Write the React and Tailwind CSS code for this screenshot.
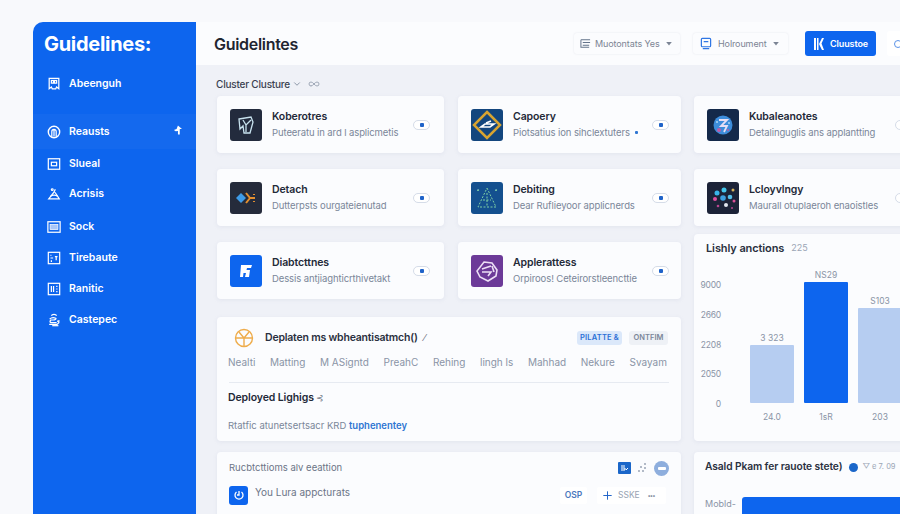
import { ChevronDown, Infinity as InfinityIcon, Plus } from "lucide-react";

const navItems = [
  { label: "Abeenguh", icon: "book", row: "h-[22px] mb-[19px]" },
  { label: "Reausts", icon: "arch", row: "h-[35px] bg-white/[0.03]", arrow: true },
  { label: "Slueal", icon: "box", row: "h-[29px]" },
  { label: "Acrisis", icon: "flask", row: "h-[32px]" },
  { label: "Sock", icon: "panel", row: "h-[33px]" },
  { label: "Tirebaute", icon: "chart", row: "h-[30px]" },
  { label: "Ranitic", icon: "grid", row: "h-[32px]" },
  { label: "Castepec", icon: "stack", row: "h-[30px]" },
];

function NavIcon({ name }) {
  const shared = { width: 14, height: 14, viewBox: "0 0 16 16", fill: "none", stroke: "white", strokeWidth: 1.4 };
  if (name === "book") return (
    <svg {...shared}><path d="M2.500 1.500h11v12l-2.500-2-1 2H6l-1-2-2.500 2z" /><rect x="5" y="4" width="2.500" height="3" /><rect x="8.500" y="4" width="2.500" height="3" /></svg>
  );
  if (name === "arch") return (
    <svg {...shared}><circle cx="8" cy="8" r="6.500" strokeWidth="1.600" /><path d="M5.500 13V7.500a2.500 2.500 0 0 1 5 0V13M8 5v8" /></svg>
  );
  if (name === "box") return (
    <svg {...shared}><rect x="1.500" y="2" width="13" height="12" /><rect x="5" y="6" width="6" height="4" /></svg>
  );
  if (name === "flask") return (
    <svg {...shared}><circle cx="6" cy="3" r="1" /><path d="M9.500 2.500 8 6 2 13.500h12L10.500 8 9 6" /><path d="M4 10.500c2-1.500 6-1.500 8 0" /></svg>
  );
  if (name === "panel") return (
    <svg {...shared}><rect x="1" y="2" width="14" height="12" /><rect x="3.500" y="5" width="9" height="6" fill="#a9c6f7" strokeWidth="0.800" /></svg>
  );
  if (name === "chart") return (
    <svg {...shared}><rect x="1.500" y="1.500" width="13" height="13" /><path d="M4 5h1M4 8h3M9 6.500h3M10.500 6.500v4M5 10.500v2" /></svg>
  );
  if (name === "grid") return (
    <svg {...shared}><rect x="1.500" y="1.500" width="13" height="13" /><path d="M5 4.500v7M7.500 4.500v7M10.500 5h1.500M10.500 8h1.500M10.500 11h1.500" /></svg>
  );
  return (
    <svg {...shared}><path d="M5 3c1-2 5-2 6 0M3 7c2-2 5-2 7-1 1 1-1 2-3 2H4.500C3 9 3 11 5 11h6" /><path d="M2.500 13h9l2-2v-2l-2 .5" /><path d="M6 14.500h7" /></svg>
  );
}

function Sidebar() {
  return (
    <aside className="w-[163px] shrink-0 bg-[#0d65ee] rounded-tl-[10px] text-white">
      <h1 className="pl-[11px] pt-[9px] h-[51px] text-[20px] leading-[26px] font-bold tracking-[-0.3px]">Guidelines:</h1>
      {navItems.map((item) => (
        <div key={item.label} className={`flex items-center pl-[14px] pr-[14px] ${item.row}`}>
          <NavIcon name={item.icon} />
          <span className="ml-[8px] font-semibold text-[10.5px]">{item.label}</span>
          {item.arrow && (
            <svg className="ml-auto mb-[4px]" width="9" height="10" viewBox="0 0 10 10" fill="white">
              <path d="M5.500 0 10 4H7.500v6H5.500V6L3 6.500 1 5l3-1z" />
            </svg>
          )}
        </div>
      ))}
    </aside>
  );
}

function TopButton({ icon, label, width, iconGap }) {
  return (
    <div className={`h-[21px] shrink-0 flex items-center bg-[#fbfcfe] rounded-[3px] shadow-[0_0_2px_rgba(120,130,160,0.18)] pl-[6px] ${width}`}>
      {icon}
      <span className={`text-[9px] text-[#7b8494] tracking-[-0.1px] whitespace-nowrap ${iconGap}`}>{label}</span>
      <svg className="ml-[6px]" width="6" height="4" viewBox="0 0 7 5" fill="#7b8494"><path d="M0 0h7L3.500 4.500z" /></svg>
    </div>
  );
}

function Header() {
  return (
    <header className="h-[43px] shrink-0 bg-[#fbfcfe] flex items-center pl-[18px] overflow-hidden">
      <h2 className="text-[16px] font-semibold text-[#1f2531] tracking-[-0.3px] w-[360px] shrink-0">Guidelintes</h2>
      <TopButton
        label="Muotontats Yes"
        width="w-[106px]"
        iconGap="ml-[4px]"
        icon={
          <svg width="11" height="11" viewBox="0 0 12 12" fill="none" stroke="#64748b" strokeWidth="1.100">
            <path d="M1 2h10M1 2v8h9M3 5h8M3 8h7" />
          </svg>
        }
      />
      <div className="ml-[13px]">
        <TopButton
          label="Holroument"
          width="w-[95px] pl-[7px]"
          iconGap="ml-[6px]"
          icon={
            <svg width="12" height="13" viewBox="0 0 13 13" fill="none" stroke="#2f76e4" strokeWidth="1.300">
              <rect x="1.500" y="1" width="10" height="9" rx="1" />
              <path d="M4 4.500h5M3 12h7" />
            </svg>
          }
        />
      </div>
      <button className="ml-[17px] w-[71px] h-[25px] shrink-0 bg-[#0d65ee] rounded-[3px] flex items-center pl-[9px] text-white">
        <svg width="10" height="12" viewBox="0 0 10 12" fill="white"><path d="M0 0h2v12H0zM3 0h1.500v12H3zM5 6l3-6h2L7.500 5.500 10 12H8z" /></svg>
        <span className="ml-[6px] text-[9px] font-semibold whitespace-nowrap tracking-[-0.1px]">Cluustoe</span>
      </button>
      <div className="ml-[11px] w-[30px] h-[25px] bg-white rounded-[3px] shrink-0 pl-[7px] flex items-center">
        <span className="w-[8px] h-[8px] rounded-full border border-[#5c93e8]" />
      </div>
    </header>
  );
}

function Toggle() {
  return (
    <span className="w-[17px] h-[10px] rounded-full border border-[#d5dce8] bg-white flex items-center justify-center shrink-0">
      <span className="w-[4px] h-[4px] rounded-[1px] bg-[#1f63c9]" />
    </span>
  );
}

function Logo({ kind }) {
  const box = "w-[32px] h-[32px] rounded-[3px] shrink-0 flex items-center justify-center";
  if (kind === "kube") return (
    <div className={`${box} bg-[#232b3d]`}>
      <svg width="20" height="20" viewBox="0 0 20 20" fill="none" stroke="#c8e2ee" strokeWidth="1.300"><path d="M3 4l12-2 2 5-3 11H8l-1-7-3 3zM7 5l3 5 5-5M10 10v7" /></svg>
    </div>
  );
  if (kind === "diamond") return (
    <div className={`${box} bg-[#13467e]`}>
      <svg width="30" height="30" viewBox="0 0 30 30" fill="none"><path d="M15 2 28 15 15 28 2 15z" stroke="#d8a431" strokeWidth="2.500" /><path d="M9 17l4-3h9l-4 3zM14 13l5-2" stroke="white" strokeWidth="1.600" /></svg>
    </div>
  );
  if (kind === "globe") return (
    <div className={`${box} bg-[#14294a]`}>
      <svg width="24" height="24" viewBox="0 0 24 24">
        <circle cx="12" cy="12" r="9.500" fill="#3d8ddb" />
        <path d="M8 7h8l-6 6h6l-3 6" fill="none" stroke="#e6dff5" strokeWidth="1.800" />
        <circle cx="8" cy="17" r="2" fill="#c05ca8" />
        <circle cx="6" cy="9" r="1" fill="#a8d6f5" /><circle cx="18" cy="10" r="1" fill="#a8d6f5" /><circle cx="17" cy="17" r="1" fill="#c05ca8" />
      </svg>
    </div>
  );
  if (kind === "dock") return (
    <div className={`${box} bg-[#252b3b]`}>
      <svg width="22" height="18" viewBox="0 0 22 18" fill="none"><path d="M6 4l5 5-5 5-5-5z" fill="#3e9be8" /><path d="M11 4l4 5-4 5M15 9h5M19 5v1M19 12v1" stroke="#e38f2f" strokeWidth="2" /></svg>
    </div>
  );
  if (kind === "triangle") return (
    <div className={`${box} bg-[#14508f]`}>
      <svg width="26" height="26" viewBox="0 0 26 26" fill="none" stroke="#7fd0a5" strokeWidth="1" strokeDasharray="2 1.500"><path d="M13 3 22 22H4zM9 15h8M13 8v14" /><circle cx="4" cy="5" r="0.700" fill="#9ed4e8" /><circle cx="22" cy="5" r="0.700" fill="#9ed4e8" /></svg>
    </div>
  );
  if (kind === "dots") return (
    <div className={`${box} bg-[#1c2338]`}>
      <svg width="28" height="28" viewBox="0 0 28 28">
        <circle cx="15" cy="6" r="2.500" fill="#44c6ec" /><circle cx="8" cy="9" r="2.500" fill="#39b4e8" /><circle cx="21" cy="13" r="2.300" fill="#57bfe9" />
        <circle cx="14" cy="14" r="2.800" fill="#3c9fe0" /><circle cx="6" cy="15" r="2" fill="#e14fa0" /><circle cx="24" cy="6" r="1.500" fill="#d8b25a" />
        <circle cx="17" cy="21" r="2" fill="#e2e7f0" /><circle cx="25" cy="17" r="1.500" fill="#d94f97" /><circle cx="9" cy="22" r="1.300" fill="#b6468e" /><circle cx="23" cy="24" r="1" fill="#b6468e" />
      </svg>
    </div>
  );
  if (kind === "blue") return (
    <div className={`${box} bg-[#0d65ee]`}>
      <svg width="14" height="14" viewBox="0 0 14 14" fill="white"><path d="M2 1h11l-1 3H8L7.500 6H11l-1 7H6l1-4H4.500L4 13H1z" /></svg>
    </div>
  );
  return (
    <div className={`${box} bg-[#6c3a98]`}>
      <svg width="24" height="24" viewBox="0 0 24 24" fill="none" stroke="#ecdff5" strokeWidth="1.600"><path d="M9 3l8 1 5 7-1 6-8 5-8-4-3-6zM7 10l9-3M7 13h9l-3 4M17 7l2 6" /></svg>
    </div>
  );
}

function AppCard({ logo, title, desc, dot, padRight }) {
  return (
    <div className={`h-[57px] bg-[#fbfcfe] rounded-[4px] shadow-[0_1px_4px_rgba(130,140,170,0.12)] flex items-center pl-[13px] ${padRight}`}>
      <Logo kind={logo} />
      <div className="ml-[10px] whitespace-nowrap">
        <div className="text-[10.5px] leading-[16px] font-semibold text-[#232938] tracking-[-0.1px]">{title}</div>
        <div className="text-[9.5px] leading-[16px] text-[#7a8699] tracking-[-0.1px]">
          {desc}
          {dot && <span className="inline-block ml-[5px] w-[3px] h-[3px] bg-[#2f76d2] rounded-[1px] align-middle" />}
        </div>
      </div>
      <div className="ml-auto"><Toggle /></div>
    </div>
  );
}

const cards = [
  { logo: "kube", title: "Koberotres", desc: "Puteeratu in ard l asplicmetis" },
  { logo: "diamond", title: "Capoery", desc: "Piotsatius ion sihclextuters", dot: true },
  { logo: "dock", title: "Detach", desc: "Dutterpsts ourgateienutad" },
  { logo: "triangle", title: "Debiting", desc: "Dear Ruflieyoor applicnerds" },
  { logo: "blue", title: "Diabtcttnes", desc: "Dessis antjiaghticrthivetakt" },
  { logo: "purple", title: "Applerattess", desc: "Orpiroos! Ceteirorstleencttie" },
];

const tabs = ["Nealti", "Matting", "M ASigntd", "PreahC", "Rehing", "lingh ls", "Mahhad", "Nekure", "Svayam"];

function DeployPanel() {
  return (
    <section className="mt-[18px] h-[124px] bg-[#fbfcfe] rounded-[4px] shadow-[0_1px_4px_rgba(130,140,170,0.12)] px-[11px] pt-[10px]">
      <div className="flex items-center h-[22px]">
        <svg className="ml-[6px]" width="20" height="20" viewBox="0 0 20 20" fill="none" stroke="#eeac4b" strokeWidth="1.400">
          <circle cx="10" cy="10" r="8.500" /><path d="M10 10 5 4M10 10l5-6M10 10v8M10 10H2M10 10h8" />
        </svg>
        <span className="ml-[11px] text-[10.5px] font-semibold text-[#2a3040] tracking-[-0.2px]">Deplaten ms wbheantisatmch()</span>
        <span className="ml-[6px] text-[9px] text-[#6b7280]">⁄</span>
        <span className="ml-auto h-[14px] w-[45px] rounded-[3px] bg-[#dbe8fa] flex items-center justify-center text-[7.5px] font-semibold text-[#2a6fd6] tracking-[0.2px]">PILATTE &amp;</span>
        <span className="ml-[7px] mr-[2px] h-[14px] w-[39px] rounded-[3px] bg-[#eef1f6] flex items-center justify-center text-[7.5px] font-semibold text-[#7a8699]">ONTFIM</span>
      </div>
      <div className="flex justify-between mt-[5px] text-[10px] leading-[16px] text-[#8a94a6] pr-[3px]">
        {tabs.map((tab) => <span key={tab}>{tab}</span>)}
      </div>
      <div className="mt-[12px] h-[1px] bg-[#e6eaf1] mx-[1px]" />
      <div className="mt-[7px] text-[10.5px] leading-[16px] font-semibold text-[#232938] tracking-[-0.1px]">
        Deployed Lighigs <span className="text-[#6b7280] font-normal text-[9px]">⊰</span>
      </div>
      <div className="mt-[13px] text-[9.5px] leading-[14px] text-[#7a8699]">
        Rtatfic atunetsertsacr KRD <span className="text-[#2f76d2] font-semibold">tuphenentey</span>
      </div>
    </section>
  );
}

function RecoPanel() {
  return (
    <section className="mt-[11px] h-[70px] bg-[#fbfcfe] rounded-t-[4px] shadow-[0_1px_4px_rgba(130,140,170,0.12)] pl-[12px] pr-[12px] pt-[8px]">
      <div className="flex items-center h-[16px]">
        <span className="text-[9.5px] text-[#6b7587]">Rucbtcttioms alv eeattion</span>
        <svg className="ml-auto" width="13" height="12" viewBox="0 0 13 12"><rect width="13" height="12" rx="1" fill="#1a66c9" /><path d="M3 4h4M3 6h4v2H3M8 8l2-2" stroke="white" fill="none" /></svg>
        <svg className="ml-[6px]" width="12" height="12" viewBox="0 0 12 12" fill="#9aa5b5"><circle cx="8" cy="2" r="1" /><circle cx="4" cy="5" r="1" /><circle cx="8" cy="6" r="1" /><circle cx="2" cy="9" r="1" /><circle cx="6" cy="9" r="1" /></svg>
        <span className="ml-[5px] w-[15px] h-[15px] rounded-full bg-[#8eaedd] flex items-center justify-center">
          <span className="w-[8px] h-[3px] rounded-[1px] bg-white" />
        </span>
      </div>
      <div className="flex items-center mt-[9px]">
        <span className="w-[19px] h-[19px] rounded-[3px] bg-[#0d65ee] flex items-center justify-center">
          <svg width="12" height="12" viewBox="0 0 12 12" fill="none" stroke="white" strokeWidth="1.300"><path d="M3.500 3a4 4 0 1 0 5 0M6 2v4l-2 0" /></svg>
        </span>
        <span className="ml-[7px] mb-[5px] text-[10px] text-[#6b7587]">You Lura appcturats</span>
        <span className="ml-auto h-[17px] w-[27px] bg-white rounded-[2px] flex items-center justify-center text-[8.5px] text-[#4a78bd] font-semibold">OSP</span>
        <span className="ml-[10px] mr-[3px] h-[17px] w-[69px] bg-white rounded-[2px] flex items-center pl-[4px] text-[8.5px] text-[#98a3b3]">
          <Plus size={13} strokeWidth={1.800} className="text-[#1f63c9]" />
          <span className="ml-[4px]">SSKE</span>
          <span className="ml-[8px] text-[6px] tracking-[-0.5px] font-bold text-[#7a8699]">•••</span>
        </span>
      </div>
    </section>
  );
}

const axisTicks = ["9000", "2660", "2208", "2050", "0"];
const bars = [
  { value: "3 323", label: "24.0", height: 58, color: "bg-[#b6cdf1]" },
  { value: "NS29", label: "1sR", height: 121, color: "bg-[#0d65ee]" },
  { value: "S103", label: "203", height: 95, color: "bg-[#b6cdf1]" },
];

function ChartPanel() {
  return (
    <section className="h-[207px] bg-[#fbfcfe] rounded-[4px] shadow-[0_1px_4px_rgba(130,140,170,0.12)] pl-[8px] pt-[5px]">
      <div className="flex items-center h-[18px] ml-[4px]">
        <span className="text-[11px] font-semibold text-[#2a3040] tracking-[-0.1px] whitespace-nowrap">Lishly anctions</span>
        <span className="ml-[7px] text-[9px] text-[#9aa5b5]">225</span>
      </div>
      <div className="flex mt-[21px]">
        <div className="w-[19px] shrink-0 mt-[1px] h-[131px] flex flex-col justify-between items-end text-[8.5px] tracking-[-0.2px] leading-[12px] text-[#8a94a6]">
          {axisTicks.map((tick) => <span key={tick}>{tick}</span>)}
        </div>
        <div className="ml-[29px] flex gap-[10px] items-end h-[125px] shrink-0">
          {bars.map((bar) => (
            <div key={bar.label} className="w-[44px] flex flex-col items-center shrink-0">
              <span className="text-[8.5px] leading-[12px] mb-[1px] text-[#8a94a6]">{bar.value}</span>
              <div className={`w-full rounded-[1px] ${bar.color}`} style={{ height: bar.height }} />
            </div>
          ))}
        </div>
      </div>
      <div className="flex gap-[10px] ml-[48px] mt-[1px]">
        {bars.map((bar) => (
          <span key={bar.label} className="w-[44px] text-center text-[8.5px] leading-[12px] text-[#8a94a6] shrink-0">{bar.label}</span>
        ))}
      </div>
    </section>
  );
}

function RiskPanel() {
  return (
    <section className="mt-[11px] h-[70px] bg-[#fbfcfe] rounded-t-[4px] shadow-[0_1px_4px_rgba(130,140,170,0.12)] pl-[11px] pt-[7px] overflow-hidden">
      <div className="flex items-center h-[16px] whitespace-nowrap">
        <span className="text-[10.25px] font-semibold text-[#2a3040] tracking-[-0.1px]">Asald Pkam fer rauote stete)</span>
        <span className="ml-[7px] w-[9px] h-[9px] rounded-full bg-[#1a66c9] shrink-0" />
        <span className="ml-[4px] text-[7.5px] text-[#9aa5b5]">▽ e 7. 09</span>
      </div>
      <div className="flex items-start mt-[22px]">
        <span className="text-[9px] text-[#8a94a6] w-[37px] shrink-0">Mobld-</span>
        <div className="h-[20px] flex-1 bg-[#0d65ee] rounded-tl-[3px]" />
      </div>
    </section>
  );
}

export default function App() {
  return (
    <div className="w-[900px] h-[514px] overflow-hidden bg-[#f8f9fc] pt-[22px] pl-[33px] flex font-['Inter',sans-serif]">
      <Sidebar />
      <div className="flex-1 min-w-0 flex flex-col bg-[#eff1f7]">
        <Header />
        <main className="flex-1 pl-[21px] min-h-0">
          <div className="flex items-center h-[31px] pt-[7px] -ml-[1px] text-[10px] font-medium text-[#3a4150] tracking-[-0.2px]">
            Cluster Clusture
            <ChevronDown size={10} className="ml-[2px] text-[#7a8699]" />
            <InfinityIcon size={12} className="ml-[6px] text-[#a0a9b8]" />
          </div>
          <div className="flex gap-[13px]">
            <div className="w-[464px] shrink-0">
              <div className="grid grid-cols-[227px_223px] gap-x-[14px] gap-y-[16px]">
                {cards.map((card, i) => (
                  <AppCard key={card.title} {...card} padRight={i % 2 === 0 ? "pr-[14px]" : "pr-[12px]"} />
                ))}
              </div>
              <DeployPanel />
              <RecoPanel />
            </div>
            <div className="w-[220px] shrink-0">
              <div className="flex flex-col gap-[16px]">
                <AppCard logo="globe" title="Kubaleanotes" desc="Detalinguglis ans applantting" padRight="pr-[2px]" />
                <AppCard logo="dots" title="Lcloyvlngy" desc="Maurall otuplaeroh enaoistles" padRight="pr-[2px]" />
              </div>
              <div className="mt-[8px]"><ChartPanel /></div>
              <RiskPanel />
            </div>
          </div>
        </main>
      </div>
    </div>
  );
}
